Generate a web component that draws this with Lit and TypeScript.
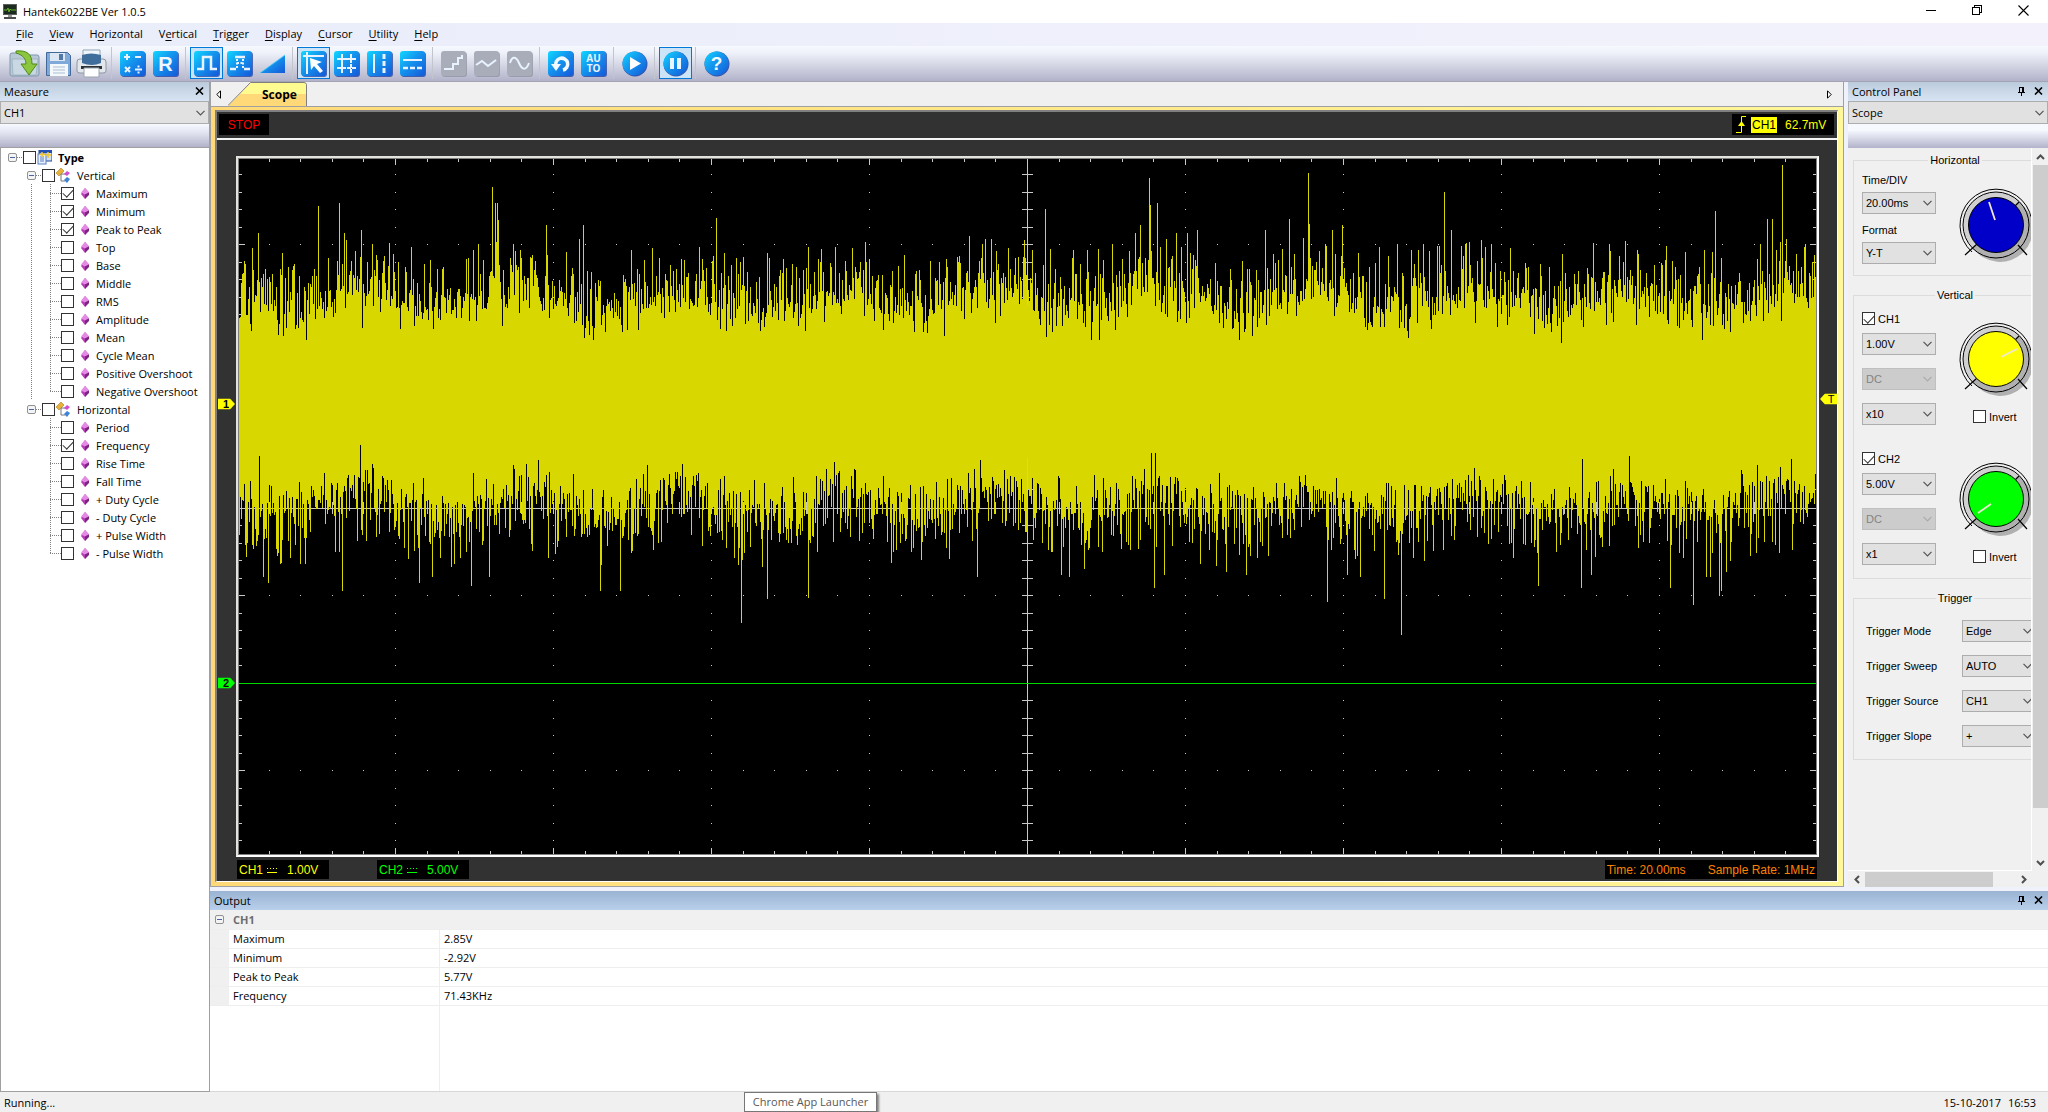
import { LitElement, html, svg, css, nothing } from "lit";
import { customElement, property } from "lit/decorators.js";
import { classMap } from "lit/directives/class-map.js";

/* ------------------------------------------------------------------ */
/* Shared styles                                                       */
/* ------------------------------------------------------------------ */

const base = css`
  * {
    box-sizing: border-box;
  }
  button {
    font: inherit;
    color: inherit;
    background: none;
    border: 0;
    padding: 0;
    margin: 0;
  }
  svg {
    display: block;
  }
  .check {
    appearance: none;
    width: 13px;
    height: 13px;
    margin: 0;
    flex: none;
    border: 1px solid #333;
    background: #fff;
    display: grid;
    place-items: center;
  }
  .check:checked::before {
    content: "";
    width: 9px;
    height: 5px;
    border-left: 1px solid #333;
    border-bottom: 1px solid #333;
    transform: translateY(-1px) rotate(-47deg);
  }
  .combo {
    display: grid;
    align-items: center;
  }
  .combo > * {
    grid-area: 1 / 1;
  }
  .combo select {
    appearance: none;
    width: 100%;
    height: 22px;
    margin: 0;
    border: 1px solid #adadad;
    border-radius: 0;
    background: #e1e1e1;
    color: #000;
    font: inherit;
    padding: 0 20px 0 3px;
  }
  .combo select:disabled {
    background: #ccc;
    border-color: #bfbfbf;
    color: #838383;
    opacity: 1;
  }
  .combo svg {
    justify-self: end;
    margin-right: 4px;
    pointer-events: none;
  }
`;

const chevron = (color = "#555") => html`<svg width="9" height="6" viewBox="0 0 9 6" aria-hidden="true">
  <path d="M.5 .8 4.5 4.8 8.5 .8" fill="none" stroke=${color} stroke-width="1.2" />
</svg>`;

const combo = (label: string, value: string, disabled = false) => html`<span class="combo">
  <select aria-label=${label} ?disabled=${disabled}><option>${value}</option></select>
  ${chevron(disabled ? "#aaa" : "#555")}
</span>`;

const closeIcon = html`<svg width="9" height="8" viewBox="0 0 9 8" aria-hidden="true">
  <path d="M1 .5 8 7.5M8 .5 1 7.5" stroke="#000" stroke-width="1.6" />
</svg>`;

const pinIcon = html`<svg width="9" height="9" viewBox="0 0 9 9" shape-rendering="crispEdges" aria-hidden="true">
  <path d="M2 0h5v1H2zM2 1h1v4H2zM5 1h2v4H5zM1 5h7v1H1zM4 6h1v3H4z" fill="#000" />
</svg>`;

/* ------------------------------------------------------------------ */
/* Title bar and menu                                                  */
/* ------------------------------------------------------------------ */

@customElement("title-bar")
class TitleBar extends LitElement {
  static styles = [
    base,
    css`
      :host {
        display: flex;
        align-items: flex-start;
        justify-content: space-between;
        height: 23px;
        background: #fff;
      }
      .title {
        display: flex;
        align-items: center;
        gap: 6px;
        height: 22px;
        padding-left: 3px;
      }
      .controls {
        display: flex;
        padding-right: 2px;
      }
      .controls button {
        width: 46px;
        height: 20px;
        display: grid;
        place-items: center;
      }
    `,
  ];

  render() {
    return html`
      <div class="title">
        <svg width="14" height="15" viewBox="0 0 14 15" aria-hidden="true">
          <rect x="0" y="0" width="14" height="11" fill="#5a5f5c" />
          <rect x="1" y="1" width="12" height="9" fill="#1d2a1e" />
          <path d="M1 6h3l1-2 1 4 1-3 1 1h5" fill="none" stroke="#67b32b" />
          <rect x="5" y="11" width="4" height="2" fill="#999" />
          <rect x="1" y="13" width="12" height="2" fill="#4c4c4c" />
        </svg>
        <span>Hantek6022BE Ver 1.0.5</span>
      </div>
      <div class="controls">
        <button aria-label="Minimize">
          <svg width="10" height="10" shape-rendering="crispEdges"><path d="M0 5h10v1H0z" /></svg>
        </button>
        <button aria-label="Restore">
          <svg width="10" height="10" viewBox="0 0 10 10" shape-rendering="crispEdges">
            <path d="M.5 2.5h7v7h-7zM2.5 2.5v-2h7v7h-2" fill="none" stroke="#000" />
          </svg>
        </button>
        <button aria-label="Close">
          <svg width="11" height="11" viewBox="0 0 11 11">
            <path d="M.5 .5l10 10M10.500 .5l-10 10" stroke="#000" stroke-width="1.1" />
          </svg>
        </button>
      </div>
    `;
  }
}

@customElement("menu-bar")
class MenuBar extends LitElement {
  static styles = [
    base,
    css`
      :host {
        display: flex;
        align-items: center;
        gap: 16px;
        height: 23px;
        padding: 0 0 2px 16px;
        background: linear-gradient(90deg, #e9edfa, #f3f2fc);
      }
      u {
        text-underline-offset: 2px;
      }
    `,
  ];

  render() {
    const items = [
      ["", "F", "ile"],
      ["", "V", "iew"],
      ["H", "o", "rizontal"],
      ["V", "e", "rtical"],
      ["", "T", "rigger"],
      ["", "D", "isplay"],
      ["", "C", "ursor"],
      ["", "U", "tility"],
      ["", "H", "elp"],
    ];
    return items.map(([a, key, b]) => html`<button>${a}<u>${key}</u>${b}</button>`);
  }
}

/* ------------------------------------------------------------------ */
/* Toolbar                                                             */
/* ------------------------------------------------------------------ */

const tile = (content: unknown, disabled = false) => svg`
  <rect x="1" y="1" width="25" height="25" rx="3" fill=${disabled ? "#8d919f" : "#1c3fa0"} opacity=".75" />
  <rect x="0" y="0" width="25" height="25" rx="3" fill=${disabled ? "#a9adba" : "url(#blue)"} />
  ${content}`;

const disc = (content: unknown) => svg`
  <circle cx="13" cy="13" r="12.500" fill="#14389b" opacity=".8" />
  <circle cx="12.500" cy="12.500" r="12" fill="url(#blue)" />
  ${content}`;

const line = (d: string, width = 2, extra = "") => svg`
  <path d=${d} fill="none" stroke="#e8f3ff" stroke-width=${width} stroke-dasharray=${extra || nothing} />`;

const glyphs: Record<string, unknown> = {
  Open: svg`
    <path d="M-3 4q0-2 2-2h7l2 2h16q2 0 2 2v17q0 2-2 2H-1q-2 0-2-2z" fill="#b9c9d6" stroke="#7f99ad" />
    <path d="M-1 8h26l-2 16H0z" fill="#c9d8e2" stroke="#8fa6b7" stroke-width=".6" />
    <path d="M3 0c11-1 16 3 16 13h5l-8 11-8-11h5C13 8 10 4 3 2z" fill="#8cc63e" stroke="#4f8a1c" />`,
  Save: svg`
    <path d="M.5 1.500h21l3 3v20H.5z" fill="#7ea9d8" stroke="#43699b" />
    <rect x="4" y="2" width="15" height="8" fill="#dce7f3" />
    <rect x="13" y="3" width="4" height="6" fill="#5178a8" />
    <rect x="4" y="13" width="18" height="12" fill="#f4f8fb" />
    <path d="M7 16h12M7 19h12M7 22h12" stroke="#a9bdd2" />`,
  Print: svg`
    <path d="M4-1h17v10H4z" fill="#eef6fc" stroke="#8fa4b5" />
    <path d="M-2 11q0-3 3-3h23q3 0 3 3v9q0 2-3 2H1q-3 0-3-2z" fill="#e2e7eb" stroke="#8c969e" />
    <path d="M3 4q9-3 19 0v8q-9 4-19 0z" fill="#3f6d9c" />
    <path d="M2 15h21v3H2z" fill="#2d3135" />
    <path d="M5 17h15v9H5z" fill="#fff" stroke="#9aa6b0" />`,
  Math: tile(line("M4 6h6M7 3v6M15 6h6M5 16l5 5M10 16l-5 5M15 18.500h7M18.500 14.500v2M18.500 20.500v2", 2)),
  Reference: tile(svg`<text x="12.500" y="20" text-anchor="middle" font-family="Liberation Sans, sans-serif" font-weight="700" font-size="20" fill="#f2f7ff">R</text>`),
  "Square wave": tile(line("M3 18h6V6h8v12h6", 2.5)),
  "Pulse wave": tile(svg`${line("M3 18h6M17 18h6M8 6h10", 2.5)}${line("M10 8v10M16 8v10M10 12h6", 2, "2 1.500")}`),
  Ramp: svg`<path d="M0 22 25 4v18z" fill="url(#blue)" /><path d="M0 22 25 4" stroke="#4fd0ff" stroke-width=".8" />`,
  "Track cursor": tile(svg`${line("M2 5h21M6 1v22", 2)}<path d="M9 7l12 4-5 2 6 7-3 2-6-7-3 4z" fill="#fff" />`),
  "Grid cursor": tile(svg`${line("M3 8h19M8 3v19", 2)}${line("M3 17h19M17 3v19", 2, "4 1")}`),
  "Vertical cursor": tile(svg`${line("M7 3v19", 2)}${line("M17 3v19", 3, "5 2")}`),
  "Horizontal cursor": tile(svg`${line("M3 9h19", 2)}${line("M3 17h19", 2.5, "5 2")}`),
  "Step interpolation": tile(line("M3 18h9v-5h5V7h4V4", 2), true),
  "Linear interpolation": tile(line("M2 14l6-4 6 5 8-6", 2), true),
  "Sine interpolation": tile(line("M3 12C5 5 9 5 12 12s7 8 10 0", 2), true),
  Undo: tile(svg`<path d="M8 15a6 6 0 1 1 7 4" fill="none" stroke="#f4f9ff" stroke-width="3.500" /><path d="M3 13h10l-5 7z" fill="#f4f9ff" />`),
  Auto: tile(svg`
    <text x="12.500" y="11" text-anchor="middle" font-family="Open Sans, sans-serif" font-weight="700" font-size="10" fill="#e6f4ff">AU</text>
    <text x="12.500" y="21" text-anchor="middle" font-family="Open Sans, sans-serif" font-weight="700" font-size="10" fill="#e6f4ff">TO</text>`),
  Run: disc(svg`<path d="M8 6v13l11-6.500z" fill="#fff" />`),
  Stop: disc(svg`<path d="M7 7h4v11H7zM14 7h4v11h-4z" fill="#e9f5ff" />`),
  Help: disc(svg`<text x="12.500" y="19" text-anchor="middle" font-family="Liberation Sans, sans-serif" font-weight="700" font-size="19" fill="#f4f9ff">?</text>`),
};

@customElement("tool-bar")
class ToolBar extends LitElement {
  static styles = [
    base,
    css`
      :host {
        display: flex;
        height: 36px;
        padding: 1px 9px 2px;
        background: linear-gradient(#f6f9fe, #eef1f9 20%, #d4d6e4 55%, #b2b3ca);
        border-bottom: 1px solid #a3a3b3;
      }
      .group {
        display: flex;
      }
      .group + .group {
        padding-left: 4px;
        margin-left: 3px;
        border-left: 1px solid #c2c5cc;
      }
      .tool {
        width: 33px;
        height: 32px;
        border: 1px solid transparent;
        display: grid;
        place-items: center;
      }
      .tool.on {
        background: #cce4f7;
        border-color: #0078d7;
      }
      .glyph {
        overflow: visible;
      }
    `,
  ];

  render() {
    const groups = [
      ["Open", "Save", "Print"],
      ["Math", "Reference"],
      ["Square wave", "Pulse wave", "Ramp"],
      ["Track cursor", "Grid cursor", "Vertical cursor", "Horizontal cursor"],
      ["Step interpolation", "Linear interpolation", "Sine interpolation"],
      ["Undo", "Auto"],
      ["Run"],
      ["Stop"],
      ["Help"],
    ];
    const on = new Set(["Square wave", "Track cursor", "Stop"]);
    return groups.map(
      (group) => html`<div class="group">
        ${group.map(
          (name) => html`<button class=${classMap({ tool: true, on: on.has(name) })} aria-label=${name}>
            <svg class="glyph" width="25" height="25" viewBox="0 0 25 25">
              <defs>
                <linearGradient id="blue" x1="0" y1="0" x2="1" y2="1">
                  <stop offset="0" stop-color="#10d8ff" />
                  <stop offset=".45" stop-color="#1495ee" />
                  <stop offset="1" stop-color="#1458d8" />
                </linearGradient>
              </defs>
              ${glyphs[name]}
            </svg>
          </button>`
        )}
      </div>`
    );
  }
}

/* ------------------------------------------------------------------ */
/* Panel caption                                                       */
/* ------------------------------------------------------------------ */

@customElement("panel-caption")
class PanelCaption extends LitElement {
  @property() label = "";
  @property({ type: Boolean }) pin = false;
  @property({ type: Boolean, reflect: true }) strong = false;

  static styles = [
    base,
    css`
      :host {
        display: flex;
        align-items: center;
        height: 19px;
        padding: 0 1px 1px 4px;
        background: linear-gradient(#bccbdc, #d7e4f3);
      }
      :host([strong]) {
        background: linear-gradient(#9ab3d2, #b8d0ea);
      }
      .label {
        flex: 1;
      }
      button {
        width: 17px;
        height: 15px;
        display: grid;
        place-items: center;
      }
    `,
  ];

  render() {
    return html`
      <span class="label">${this.label}</span>
      ${this.pin ? html`<button aria-label="Pin">${pinIcon}</button>` : nothing}
      <button aria-label="Close">${closeIcon}</button>
    `;
  }
}

/* ------------------------------------------------------------------ */
/* Measure panel                                                       */
/* ------------------------------------------------------------------ */

@customElement("measure-panel")
class MeasurePanel extends LitElement {
  static styles = [
    base,
    css`
      :host {
        display: flex;
        flex-direction: column;
        border-right: 1px solid #a0a0a0;
        border-bottom: 1px solid #a0a0a0;
        background: #fff;
      }
      .combo select {
        height: 23px;
      }
      .strip {
        height: 24px;
        background: linear-gradient(#f6f9fe, #e4e7f2 35%, #b2b3ca);
        border-bottom: 1px solid #a0a0a0;
      }
      .tree {
        flex: 1;
        border-left: 1px solid #a0a0a0;
      }
      .row {
        display: flex;
        align-items: center;
        height: 18px;
        white-space: nowrap;
      }
      .root {
        padding-left: 7px;
        font-weight: 700;
      }
      .branch {
        padding-left: 26px;
      }
      .leaf {
        padding-left: 30px;
      }
      .expander {
        width: 9px;
        height: 9px;
        border: 1px solid #919191;
        border-radius: 2px;
        background: linear-gradient(#4b63a7, #4b63a7) 1px 3px / 5px 1px no-repeat, #f4f4f4;
      }
      .dots {
        width: 6px;
        height: 1px;
        background: repeating-linear-gradient(90deg, #808080 0 1px, transparent 1px 2px);
      }
      .rail {
        width: 19px;
        height: 18px;
      }
      .rail.line {
        background: repeating-linear-gradient(#808080 0 1px, transparent 1px 2px) 0 0 / 1px 100% no-repeat;
      }
      .elbow {
        width: 11px;
        height: 18px;
        background: repeating-linear-gradient(#808080 0 1px, transparent 1px 2px) 0 0 / 1px 100% no-repeat,
          repeating-linear-gradient(90deg, #808080 0 1px, transparent 1px 2px) 0 9px / 100% 1px no-repeat;
      }
      .elbow.last {
        background-size: 1px 9px, 100% 1px;
      }
      label {
        display: flex;
        align-items: center;
      }
      .icon {
        margin: 0 6px 0 1px;
      }
      .gem {
        margin: 0 6px 0 6px;
      }
    `,
  ];

  private leaf(name: string, checked: boolean, last: boolean, rail: boolean) {
    return html`<div class="row leaf">
      <span class=${classMap({ rail: true, line: rail })}></span>
      <span class=${classMap({ elbow: true, last })}></span>
      <label>
        <input class="check" type="checkbox" .checked=${checked} />
        <svg class="gem" width="10" height="11" viewBox="0 0 10 11" aria-hidden="true">
          <path d="M5 0 9 4.500 5 11 1 6z" fill="#b63cb4" />
          <path d="M5 0 9 4.500 5 6.500 1 4.500z" fill="#e58be6" />
          <path d="M5 6.500 9 4.500V7L5 11z" fill="#7d2482" />
        </svg>
        ${name}
      </label>
    </div>`;
  }

  private branch(name: string) {
    return html`<div class="row branch">
      <button class="expander" aria-label=${"Collapse " + name}></button>
      <span class="dots"></span>
      <label>
        <input class="check" type="checkbox" />
        <svg class="icon" width="15" height="15" viewBox="0 0 15 15" aria-hidden="true">
          <path d="M0 5 5 0l3 3-5 5z" fill="#e8b23a" stroke="#b17d16" stroke-width=".6" />
          <path d="M5 6v7h4M5 6h5" fill="none" stroke="#777" />
          <path d="M8 6l3-3 3 2-3 3z" fill="#d24fd2" />
          <path d="M8 12l3-3 3 2-3 4z" fill="#3b82d8" />
        </svg>
        ${name}
      </label>
    </div>`;
  }

  render() {
    const vertical = [
      "Maximum",
      "Minimum",
      "Peak to Peak",
      "Top",
      "Base",
      "Middle",
      "RMS",
      "Amplitude",
      "Mean",
      "Cycle Mean",
      "Positive Overshoot",
      "Negative Overshoot",
    ];
    const horizontal = [
      "Period",
      "Frequency",
      "Rise Time",
      "Fall Time",
      "+ Duty Cycle",
      "- Duty Cycle",
      "+ Pulse Width",
      "- Pulse Width",
    ];
    const on = new Set(["Maximum", "Minimum", "Peak to Peak", "Frequency"]);
    return html`
      <panel-caption label="Measure"></panel-caption>
      ${combo("Measure channel", "CH1")}
      <div class="strip"></div>
      <div class="tree">
        <div class="row root">
          <button class="expander" aria-label="Collapse Type"></button>
          <span class="dots"></span>
          <label>
            <input class="check" type="checkbox" />
            <svg class="icon" width="15" height="15" viewBox="0 0 15 15" aria-hidden="true">
              <rect x="2" y="0" width="13" height="11" fill="#cfe0f6" stroke="#23479c" />
              <rect x="2" y="0" width="13" height="3" fill="#2450b4" />
              <rect x="1" y="4" width="8" height="10" fill="#e8f0fb" stroke="#5a7ec0" />
              <path d="M3 7h4M3 9h4M3 11h4" stroke="#5a7ec0" />
              <path d="M5 2v5M3 4.500h5M11 2v6M8 5h6" stroke="#f3c52d" stroke-width="1.500" />
            </svg>
            Type
          </label>
        </div>
        ${this.branch("Vertical")}
        ${vertical.map((n, i) => this.leaf(n, on.has(n), i === vertical.length - 1, true))}
        ${this.branch("Horizontal")}
        ${horizontal.map((n, i) => this.leaf(n, on.has(n), i === horizontal.length - 1, false))}
      </div>
    `;
  }
}

/* ------------------------------------------------------------------ */
/* Scope view                                                          */
/* ------------------------------------------------------------------ */

const PLOT_W = 1577;
const PLOT_H = 694;
const CENTER_X = 788;
const CENTER_Y = 348;
const STEP_X = 31.6;
const STEP_Y = 17.5;
const HUM_PERIOD = 158;

/* Column extremes that stand out of the noise: [x, y] pairs. */
const HIGH: number[] = [
  19, 74, 67, 181, 79, 47, 100, 44, 105, 74, 122, 71, 133, 85, 172, 88, 39, 176, 253, 28, 256, 44, 258, 44,
  259, 61, 307, 66, 344, 66, 340, 80, 392, 91, 274, 85, 239, 85, 234, 91, 354, 181, 263, 167, 477, 59, 730, 77,
  746, 80, 752, 80, 806, 50, 834, 91, 848, 91, 873, 85, 896, 74, 901, 66, 910, 19, 911, 46, 918, 44, 927, 80,
  937, 74, 948, 74, 958, 71, 1003, 102, 1026, 71, 1050, 60, 1069, 14, 1070, 65, 1086, 85, 1093, 71, 1103, 66,
  1140, 88, 1158, 85, 1184, 85, 1205, 33, 1212, 71, 1226, 85, 1246, 88, 1465, 91, 1476, 52, 1528, 60, 1533, 60,
  1543, 6, 1547, 80, 1566, 85, 807, 178, 852, 181, 860, 181, 1000, 181,
];
const LOW: number[] = [
  24, 417, 29, 423, 41, 404, 61, 404, 66, 404, 103, 431, 180, 423, 193, 417, 215, 404, 232, 426, 250, 417,
  309, 398, 361, 431, 381, 431, 414, 390, 738, 417, 822, 415, 830, 417, 845, 409, 915, 428, 925, 415, 961, 404,
  987, 412, 1007, 415, 1088, 442, 1108, 415, 1121, 417, 1145, 439, 1162, 475, 1274, 398, 1299, 426, 1342, 428,
  1352, 415, 1363, 387, 1431, 428, 1454, 445, 1467, 417, 1471, 417, 1480, 436, 1482, 431, 1487, 412, 1540, 393,
  502, 463, 528, 439, 569, 438, 20, 297, 121, 286, 133, 305, 287, 305, 912, 294, 916, 294, 1343, 300, 1390, 297,
  1552, 300,
];

const pairs = (flat: number[]) => {
  const map = new Map<number, number>();
  for (let i = 0; i < flat.length; i += 2) map.set(flat[i], flat[i + 1]);
  return map;
};

/* Mains hum with heavy-tailed noise on both sides of each column. */
function tracePath(): string {
  let seed = 20171;
  const random = () => {
    seed = (seed * 1664525 + 1013904223) >>> 0;
    return (seed + 1) / 4294967298;
  };
  const tail = () => {
    const t = -Math.log(-Math.log(random()));
    return t > 3.2 ? 1.2 + random() * 2 : t;
  };
  const high = pairs(HIGH);
  const low = pairs(LOW);
  let d = "";
  for (let x = 0; x < PLOT_W; x++) {
    const hum = 9 * Math.cos((2 * Math.PI * (x - 914)) / HUM_PERIOD);
    const top = high.get(x) ?? Math.round(142 - hum - 18 * tail());
    const bottom = low.get(x) ?? Math.round(342 - hum + 18 * tail());
    d += `M${x} ${top}h1V${bottom}h-1z`;
  }
  return d;
}

function gridPath(): string {
  let d = "";
  const rect = (x: number, y: number, w: number, h: number) => {
    d += `M${x} ${y}h${w}v${h}h${-w}z`;
  };
  rect(CENTER_X, 0, 1, PLOT_H);
  rect(0, CENTER_Y, PLOT_W, 1);
  for (let i = 1; i < 50; i++) {
    const x = Math.floor(i * STEP_X - 2 + 0.5);
    const long = i % 5 === 0 ? 6 : 3;
    rect(x, 0, 1, long);
    rect(x, PLOT_H - long, 1, long);
    rect(x, CENTER_Y - 5, 1, 11);
    for (let row = 1; row < 8; row++) rect(x, Math.floor(row * 5 * STEP_Y - 2), 1, 1);
  }
  for (let j = 1; j < 40; j++) {
    const y = Math.floor(j * STEP_Y - 2);
    const long = j % 5 === 0 ? 6 : 3;
    rect(0, y, long, 1);
    rect(PLOT_W - long, y, long, 1);
    rect(CENTER_X - 5, y, 11, 1);
    for (let col = 1; col < 10; col++) rect(col * 158 - 2, y, 1, 1);
  }
  return d;
}

const TRACE = tracePath();
const GRID = gridPath();

@customElement("scope-view")
class ScopeView extends LitElement {
  static styles = [
    base,
    css`
      :host {
        display: flex;
        flex-direction: column;
        border: 1px solid #a0a0a0;
        border-top: 0;
        background: #f0f0f0;
        min-height: 0;
      }
      .tabs {
        display: flex;
        align-items: center;
        height: 25px;
        padding-left: 5px;
        padding-right: 11px;
        border-bottom: 1px solid #a0a0a0;
      }
      .arrow {
        width: 5px;
      }
      .tab {
        display: grid;
        width: 79px;
        height: 24px;
        margin-left: 7px;
        margin-right: auto;
        align-self: end;
        font-weight: 700;
      }
      .tab > * {
        grid-area: 1 / 1;
      }
      .tab span {
        align-self: center;
        padding-left: 34px;
        font-size: 12px;
        text-align: left;
      }
      .frame {
        flex: 1;
        display: flex;
        min-height: 0;
        padding: 3px 5px 4px 4px;
        background: linear-gradient(90deg, #ffd978, #fff799);
      }
      .dark {
        flex: 1;
        display: flex;
        flex-direction: column;
        min-width: 0;
        min-height: 0;
        background: #323232;
        border: 2px solid #808080;
        border-right: 1px solid #fff;
        border-bottom: 1px solid #fff;
        font: 12px/16px "Liberation Sans", Arial, sans-serif;
      }
      .top {
        display: flex;
        justify-content: space-between;
        padding: 2px 3px 3px 2px;
        border-bottom: 2px solid #f4f4f4;
      }
      .box {
        display: flex;
        align-items: center;
        background: #000;
        white-space: nowrap;
      }
      .stop {
        height: 21px;
        width: 50px;
        justify-content: center;
        color: #f00;
      }
      .trig {
        height: 21px;
        width: 102px;
        padding-left: 4px;
        color: #ff0;
      }
      .trig .ch {
        margin: 0 8px 0 5px;
        padding: 0 1px;
        background: #ff0;
        color: #000;
      }
      .stage {
        flex: 1;
        position: relative;
        display: flex;
        min-height: 0;
        margin: 16px 18px 0 19px;
        border: 2px solid #e4e2dd;
        border-right-color: #fff;
        border-bottom-color: #fff;
      }
      .plot {
        flex: 1;
        min-width: 0;
        height: 100%;
        background: #000;
        outline: 1px solid #808080;
        outline-offset: -1px;
      }
      .marker {
        position: absolute;
        transform: translateY(-50%);
      }
      .marker.left {
        right: calc(100% + 3px);
      }
      .marker.right {
        left: calc(100% + 3px);
      }
      .foot {
        display: flex;
        gap: 48px;
        padding: 3px 20px 2px 20px;
      }
      .reading {
        height: 19px;
        width: 92px;
        padding-left: 2px;
      }
      .reading svg {
        margin: 2px 10px 0 4px;
      }
      .one {
        color: #ff0;
      }
      .two {
        color: #0f0;
      }
      .time {
        height: 19px;
        margin-left: auto;
        padding: 0 2px;
        gap: 22px;
        color: #ff8000;
      }
    `,
  ];

  private dc() {
    return html`<svg width="10" height="6" viewBox="0 0 10 6" shape-rendering="crispEdges" aria-hidden="true">
      <path d="M0 4h10v1H0zM0 0h1v1H0zM3 0h1v1H3zM6 0h1v1H6zM9 0h1v1H9z" fill="currentColor" />
    </svg>`;
  }

  private marker(side: "left" | "right", y: number, color: string, text: string) {
    const right = side === "right";
    return html`<svg
      class=${"marker " + side}
      style=${`top:${((y / PLOT_H) * 100).toFixed(2)}%`}
      width="17"
      height="11"
      viewBox="0 0 17 11"
    >
      <path d=${right ? "M17 0H5L0 5.500 5 11H17z" : "M0 0H12L17 5.500 12 11H0z"} fill=${color} />
      <text
        x=${right ? 11 : 8}
        y="9.500"
        text-anchor="middle"
        font-family="Liberation Sans, sans-serif"
        font-weight=${right ? 400 : 700}
        font-size="11"
        fill="#000"
      >${text}</text>
    </svg>`;
  }

  render() {
    return html`
      <div class="tabs">
        <button class="arrow" aria-label="Scroll tabs left">
          <svg width="5" height="9" viewBox="0 0 5 9"><path d="M4.500 .8v7.400L.8 4.500z" fill="#fff" stroke="#000" /></svg>
        </button>
        <button class="tab">
          <svg width="79" height="24" viewBox="0 0 79 24" aria-hidden="true">
            <path d="M0 24 23 1H77q1 0 1 1V24z" fill="#ffd978" />
            <path d="M12 12 23 1H77q1 0 1 1V12z" fill="#fffb90" />
            <path d="M0 23.500 22.500 .5H76q2 0 2.500 2V24" fill="none" stroke="#808080" />
          </svg>
          <span>Scope</span>
        </button>
        <button class="arrow" aria-label="Scroll tabs right">
          <svg width="5" height="9" viewBox="0 0 5 9"><path d="M.5 .8v7.400l3.700-3.700z" fill="#fff" stroke="#000" /></svg>
        </button>
      </div>
      <div class="frame">
        <div class="dark">
          <div class="top">
            <span class="box stop">STOP</span>
            <span class="box trig">
              <svg width="10" height="17" viewBox="0 0 10 17" aria-hidden="true">
                <path d="M0 16.500h5.500V.5H10" fill="none" stroke="#ff0" />
                <path d="M5.500 5 9 10H2z" fill="#ff0" />
              </svg>
              <span class="ch">CH1</span>
              <span>62.7mV</span>
            </span>
          </div>
          <div class="stage">
            <svg
              class="plot"
              viewBox=${`-1 -1 ${PLOT_W + 2} ${PLOT_H + 2}`}
              preserveAspectRatio="none"
              shape-rendering="crispEdges"
              role="img"
              aria-label="Channel traces"
            >
              <path d=${GRID} fill="#c8c8c8" />
              <path d=${TRACE} fill="#d8d800" />
              <path d="M0 523h1577v1H0z" fill="#00d800" />
            </svg>
            ${this.marker("left", 245, "#ff0", "1")} ${this.marker("left", 523, "#0f0", "2")}
            ${this.marker("right", 240, "#ff0", "T")}
          </div>
          <div class="foot">
            <span class="box reading one">CH1${this.dc()}1.00V</span>
            <span class="box reading two">CH2${this.dc()}5.00V</span>
            <span class="box time"><span>Time: 20.00ms</span><span>Sample Rate: 1MHz</span></span>
          </div>
        </div>
      </div>
    `;
  }
}

/* ------------------------------------------------------------------ */
/* Control panel                                                       */
/* ------------------------------------------------------------------ */

@customElement("control-panel")
class ControlPanel extends LitElement {
  static styles = [
    base,
    css`
      :host {
        display: flex;
        flex-direction: column;
        min-height: 0;
        background: #f0f0f0;
      }
      .head .combo select {
        height: 23px;
      }
      .strip {
        height: 24px;
        background: linear-gradient(#f6f9fe 25%, #e4e7f2 45%, #b2b3ca);
      }
      .area {
        flex: 1;
        min-height: 0;
        display: grid;
        grid-template: minmax(0, 1fr) 16px / minmax(0, 1fr) 16px;
        font: 11px/14px "Liberation Sans", Arial, sans-serif;
      }
      .body {
        overflow: hidden;
        padding: 5px 0 0 5px;
        border-right: 1px solid #fff;
        border-bottom: 1px solid #fff;
      }
      fieldset {
        width: 204px;
        min-width: 0;
        margin: 0 0 12px;
        border: 1px solid #dcdcdc;
        padding: 0;
      }
      legend {
        margin: 0 auto;
        padding: 0 2px;
        height: 14px;
      }
      .pair {
        display: grid;
        grid-template-columns: 74px 74px;
        gap: 23px;
        padding-left: 8px;
      }
      .col {
        display: flex;
        flex-direction: column;
      }
      .timing {
        padding-top: 6px;
        padding-bottom: 11px;
      }
      .timing .col {
        gap: 5px;
      }
      .timing .col .combo:nth-child(2) {
        margin-bottom: 4px;
      }
      .timing .dial {
        padding-top: 15px;
      }
      .channel {
        padding-top: 10px;
        padding-bottom: 13px;
      }
      .channel + .channel {
        padding-top: 14px;
      }
      .channel .col:first-child {
        gap: 13px;
      }
      .channel .tick {
        margin-bottom: -5px;
      }
      .channel .dial {
        padding-top: 10px;
        gap: 14px;
      }
      .tick {
        display: flex;
        align-items: center;
        gap: 3px;
        height: 13px;
      }
      .channel .dial .tick {
        padding-left: 14px;
        margin: 0;
      }
      .dial svg {
        overflow: visible;
      }
      .trigger {
        display: grid;
        grid-template-columns: 96px 74px;
        row-gap: 13px;
        align-items: center;
        padding: 15px 0 12px 12px;
      }
      .bar {
        display: flex;
        align-items: center;
      }
      .bar button {
        flex: none;
        width: 17px;
        height: 17px;
        display: grid;
        place-items: center;
      }
      .bar.v {
        flex-direction: column;
      }
      .thumb {
        background: #cdcdcd;
      }
      .v .thumb {
        width: 15px;
        flex: 642;
      }
      .v .rest {
        flex: 46;
      }
      .h .thumb {
        height: 15px;
        flex: 127;
      }
      .h .rest {
        flex: 22;
      }
    `,
  ];

  private knob(color: string, hand: string) {
    return html`<svg width="74" height="74" viewBox="-37 -37 74 74" aria-hidden="true">
      <path d="M-24 27A36 36 0 1 1 24 27" fill="#f0f0f0" stroke="#000" />
      <circle r="33" fill="#d0d0d0" />
      <path d="M23-23A33 33 0 1 1-23 23z" fill="#b0b0b0" />
      <circle r="33" fill="none" stroke="#000" />
      <path d="M23-23 19-19M-19 19-31 30M22 20 31 30" stroke="#000" stroke-width="1.200" />
      <circle r="27.500" fill=${color} stroke="#000" />
      <path d=${hand} stroke="#eee8d5" stroke-width="1.800" />
    </svg>`;
  }

  private channel(name: string, volts: string, probe: string, color: string, hand: string) {
    return html`<div class="pair channel">
      <div class="col">
        <label class="tick"><input class="check" type="checkbox" checked />${name}</label>
        ${combo(name + " volts per division", volts)} ${combo(name + " coupling", "DC", true)}
        ${combo(name + " probe", probe)}
      </div>
      <div class="col dial">
        ${this.knob(color, hand)}
        <label class="tick"><input class="check" type="checkbox" />Invert</label>
      </div>
    </div>`;
  }

  render() {
    const triggers = [
      ["Trigger Mode", "Edge"],
      ["Trigger Sweep", "AUTO"],
      ["Trigger Source", "CH1"],
      ["Trigger Slope", "+"],
    ];
    return html`
      <div class="head">
        <panel-caption label="Control Panel" pin></panel-caption>
        ${combo("Panel", "Scope")}
        <div class="strip"></div>
      </div>
      <div class="area">
        <div class="body">
          <fieldset>
            <legend>Horizontal</legend>
            <div class="pair timing">
              <div class="col">
                <label>Time/DIV</label>${combo("Time/DIV", "20.00ms")}
                <label>Format</label>${combo("Format", "Y-T")}
              </div>
              <div class="dial">${this.knob("#0000c8", "M-7-23-1-5")}</div>
            </div>
          </fieldset>
          <fieldset>
            <legend>Vertical</legend>
            ${this.channel("CH1", "1.00V", "x10", "#ff0", "M5-2 21-10")}
            ${this.channel("CH2", "5.00V", "x1", "#0f0", "M-5 5-18 14")}
          </fieldset>
          <fieldset>
            <legend>Trigger</legend>
            <div class="trigger">
              ${triggers.map(([name, value]) => html`<span>${name}</span>${combo(name, value)}`)}
            </div>
          </fieldset>
        </div>
        <div class="bar v">
          <button aria-label="Scroll up"><svg width="9" height="6" viewBox="0 0 9 6"><path d="M1 5 4.500 1.500 8 5" fill="none" stroke="#505050" stroke-width="2" /></svg></button>
          <div class="thumb"></div>
          <div class="rest"></div>
          <button aria-label="Scroll down"><svg width="9" height="6" viewBox="0 0 9 6"><path d="M1 1 4.500 4.500 8 1" fill="none" stroke="#505050" stroke-width="2" /></svg></button>
        </div>
        <div class="bar h">
          <button aria-label="Scroll left"><svg width="6" height="9" viewBox="0 0 6 9"><path d="M5 1 1.500 4.500 5 8" fill="none" stroke="#505050" stroke-width="2" /></svg></button>
          <div class="thumb"></div>
          <div class="rest"></div>
          <button aria-label="Scroll right"><svg width="6" height="9" viewBox="0 0 6 9"><path d="M1 1 4.500 4.500 1 8" fill="none" stroke="#505050" stroke-width="2" /></svg></button>
        </div>
      </div>
    `;
  }
}

/* ------------------------------------------------------------------ */
/* Output panel                                                        */
/* ------------------------------------------------------------------ */

@customElement("output-panel")
class OutputPanel extends LitElement {
  static styles = [
    base,
    css`
      :host {
        display: flex;
        flex-direction: column;
        background: #fff;
        border-bottom: 1px solid #d7d7d7;
      }
      .body {
        flex: 1;
        background: linear-gradient(#eee, #eee) 229px 0 / 1px 100% no-repeat;
      }
      table {
        width: 100%;
        border-collapse: separate;
        border-spacing: 0;
        table-layout: fixed;
      }
      .gutter {
        width: 19px;
      }
      .names {
        width: 211px;
      }
      td,
      th {
        height: 19px;
        padding: 0 0 1px 4px;
        text-align: left;
        font-weight: 400;
        line-height: 15px;
        border-bottom: 1px solid #eee;
      }
      .group th,
      .group td {
        height: 20px;
        background: #f0f0f0;
        color: #6d6d6d;
        font-weight: 700;
      }
      .side {
        background: #f0f0f0;
      }
      .name {
        border-right: 1px solid #eee;
      }
      .group .name {
        border-right: 0;
      }
      .expander {
        display: block;
        width: 9px;
        height: 9px;
        margin-left: 1px;
        border: 1px solid #919191;
        border-radius: 2px;
        background: linear-gradient(#4b63a7, #4b63a7) 1px 3px / 5px 1px no-repeat, #f4f4f4;
      }
    `,
  ];

  render() {
    const rows = [
      ["Maximum", "2.85V"],
      ["Minimum", "-2.92V"],
      ["Peak to Peak", "5.77V"],
      ["Frequency", "71.43KHz"],
    ];
    return html`
      <panel-caption label="Output" pin strong></panel-caption>
      <div class="body">
        <table>
          <colgroup>
            <col class="gutter" />
            <col class="names" />
            <col />
          </colgroup>
          <tbody>
            <tr class="group">
              <td><button class="expander" aria-label="Collapse CH1"></button></td>
              <th class="name" colspan="2">CH1</th>
            </tr>
            ${rows.map(
              ([name, value]) => html`<tr>
                <td class="side"></td>
                <th class="name" scope="row">${name}</th>
                <td>${value}</td>
              </tr>`
            )}
          </tbody>
        </table>
      </div>
    `;
  }
}

/* ------------------------------------------------------------------ */
/* Application                                                         */
/* ------------------------------------------------------------------ */

@customElement("app-root")
class AppRoot extends LitElement {
  static styles = [
    base,
    css`
      :host {
        display: flex;
        flex-direction: column;
        position: relative;
        height: 100vh;
        overflow: hidden;
        background: #f0f2fb;
        color: #000;
        font: 11px/15px "Open Sans", "Noto Sans", sans-serif;
      }
      .main {
        flex: 1;
        min-height: 0;
        display: grid;
        grid-template-columns: 210px minmax(0, 1fr);
      }
      .right {
        display: grid;
        grid-template-rows: minmax(0, 1fr) 201px;
        row-gap: 4px;
        min-height: 0;
      }
      .upper {
        display: grid;
        grid-template-columns: minmax(0, 1fr) 200px;
        column-gap: 4px;
        min-height: 0;
      }
      .status {
        display: flex;
        align-items: center;
        justify-content: space-between;
        height: 20px;
        padding: 0 12px 0 4px;
        background: #f0f0f0;
      }
      .when {
        display: flex;
        gap: 7px;
      }
      .tip {
        position: absolute;
        left: 744px;
        bottom: 0;
        width: 133px;
        height: 20px;
        line-height: 17px;
        text-align: center;
        border: 1px solid #767676;
        background: #fff;
        color: #575757;
        box-shadow: 2px 2px 2px rgba(0, 0, 0, 0.45);
      }
    `,
  ];

  render() {
    return html`
      <title-bar></title-bar>
      <menu-bar></menu-bar>
      <tool-bar></tool-bar>
      <div class="main">
        <measure-panel></measure-panel>
        <div class="right">
          <div class="upper">
            <scope-view></scope-view>
            <control-panel></control-panel>
          </div>
          <output-panel></output-panel>
        </div>
      </div>
      <div class="status">
        <span>Running...</span>
        <span class="when"><span>15-10-2017</span><span>16:53</span></span>
      </div>
      <div class="tip" role="tooltip">Chrome App Launcher</div>
    `;
  }
}
